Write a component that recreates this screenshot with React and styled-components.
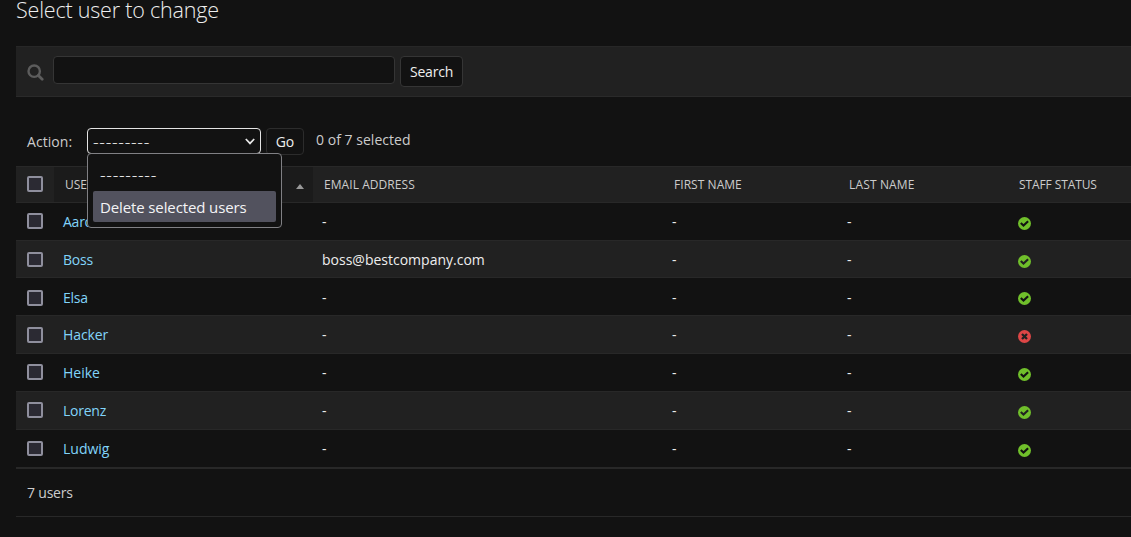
import React from 'react';
import styled, { createGlobalStyle } from 'styled-components';

const GlobalStyle = createGlobalStyle`
  * { box-sizing: border-box; }
  body {
    margin: 0;
    background: #121212;
    color: #eeeeee;
    font-family: "Segoe UI", "Open Sans", "Noto Sans", sans-serif;
    font-size: 14px;
    overflow: hidden;
  }
`;

const Page = styled.main`
  height: 537px;
  padding-left: 16px;
  overflow: hidden;
`;

const Title = styled.h1`
  height: 46px;
  margin: 0;
  font-size: 21.5px;
  font-weight: 300;
  line-height: 19px;
  letter-spacing: -0.2px;
`;

const Text = styled.span`
  letter-spacing: ${(p) => p.$ls || 0}px;
  white-space: pre;
`;

const Dashes = styled.span`
  font-size: 17.5px;
  font-weight: 300;
  line-height: 20px;
  letter-spacing: 0.7px;
  white-space: pre;
`;

const Toolbar = styled.form`
  display: flex;
  align-items: flex-start;
  height: 51px;
  padding: 9px 0 0 11px;
  background: #212121;
  border-top: 1px solid #272727;
  border-bottom: 1px solid #2a2a2a;
`;

const SearchIcon = styled.svg`
  display: block;
  width: 17px;
  height: 17px;
  margin: 8px 9px 0 0;
`;

const SearchField = styled.div`
  width: 342px;
  height: 28px;
  margin-right: 5px;
  background: #121212;
  border: 1px solid #353535;
  border-radius: 4px;
`;

const Button = styled.button`
  display: flex;
  align-items: center;
  justify-content: center;
  width: ${(p) => p.$w}px;
  height: ${(p) => p.$h}px;
  padding: 0;
  background: #121212;
  border: 1px solid ${(p) => p.$border || '#353535'};
  border-radius: 4px;
  color: #eeeeee;
  font: inherit;
`;

const Actions = styled.div`
  display: flex;
  align-items: flex-start;
  height: 69px;
  padding: 31px 0 0 11px;
  color: #cccccc;
`;

const ActionLabel = styled.label`
  width: 60px;
  line-height: 27px;
`;

const Select = styled.div`
  position: relative;
  display: flex;
  align-items: center;
  justify-content: space-between;
  width: 174px;
  height: 26px;
  margin-right: 5px;
  padding: 2px 5px 0 5px;
  border: 1px solid #e4e4e4;
  border-radius: 4px;
  color: #eeeeee;
`;

const Chevron = styled.svg`
  width: 10px;
  height: 8px;
`;

const Menu = styled.div`
  position: absolute;
  z-index: 2;
  top: 24px;
  left: -1px;
  width: 195px;
  height: 75px;
  padding: 6px 5px 5px;
  background: #121212;
  border: 1px solid #808084;
  border-radius: 4px;
`;

const MenuItem = styled.div`
  height: 31px;
  padding-left: 7px;
  line-height: 32px;
  font-size: 15px;
  color: #f4f4f6;
  border-radius: 2px;
  background: ${(p) => (p.$active ? '#52525e' : 'transparent')};
`;

const Counter = styled.span`
  margin-left: 12px;
  line-height: 23px;
`;

const Grid = styled.div`
  display: grid;
  grid-template-columns: 38px 259px 350px 175px 170px 1fr;
`;

const HeaderRow = styled(Grid)`
  height: 36px;
  background: #212121;
  border-top: 1px solid #282828;
  color: #cccccc;
  font-size: 12px;
`;

const HeaderCell = styled.div`
  display: flex;
  align-items: center;
  justify-content: space-between;
  padding: 0 9px 1px 11px;
  background: ${(p) => (p.$sorted ? '#1b1b1b' : 'transparent')};
`;

const SortArrow = styled.span`
  margin-top: 4px;
  border: 4.5px solid transparent;
  border-top: 0;
  border-bottom: 5px solid #999999;
`;

const Row = styled(Grid)`
  height: ${(p) => p.$h}px;
  background: ${(p) => (p.$odd ? '#212121' : '#121212')};
  border-top: 1px solid #282828;
  line-height: 20px;
`;

const Cell = styled.div`
  padding: ${(p) => p.$top || 9}px 0 0 9px;
`;

const CheckCell = styled.div`
  padding: ${(p) => p.$top}px 0 0 11px;
`;

const Checkbox = styled.div`
  width: 16px;
  height: ${(p) => p.$h || 16}px;
  background: #2b2a33;
  border: 2px solid #8f8f9d;
  border-radius: 2px;
`;

const StatusCell = styled.div`
  padding: 14px 0 0 10px;
`;

const StatusSvg = styled.svg`
  display: block;
  width: 13px;
  height: 13px;
`;

const Link = styled.a`
  color: #81d4fa;
`;

const Paginator = styled.footer`
  height: 50px;
  padding: 14px 0 0 11px;
  border-top: 2px solid #282828;
  border-bottom: 1px solid #282828;
  color: #cccccc;
  line-height: 20px;
`;

const users = [
  { name: 'Aaron', email: '-', staff: true, h: 38, check: 10 },
  { name: 'Boss', email: 'boss@bestcompany.com', staff: true, h: 37, check: 11, boxH: 15 },
  { name: 'Elsa', email: '-', staff: true, h: 38, check: 12, top: 10 },
  { name: 'Hacker', email: '-', staff: false, h: 38, check: 11, ls: -0.1 },
  { name: 'Heike', email: '-', staff: true, h: 38, check: 10, ls: 0 },
  { name: 'Lorenz', email: '-', staff: true, h: 38, check: 10 },
  { name: 'Ludwig', email: '-', staff: true, h: 38, check: 11, boxH: 15, ls: 0 },
];

function Status({ ok, hole }) {
  return (
    <StatusSvg viewBox="0 0 13 13">
      <circle cx="6.5" cy="6.5" r="6.5" fill={ok ? '#70bf2b' : '#dd4646'} />
      <path
        d={ok ? 'M2.8 6 L5.5 8.6 L10.1 4.2' : 'M4 4 L9 9 M9 4 L4 9'}
        fill="none"
        stroke={hole}
        strokeWidth={ok ? 2.1 : 2.3}
      />
    </StatusSvg>
  );
}

export default function App() {
  return (
    <>
      <GlobalStyle />
      <Page>
        <Title>Select user to change</Title>
        <Toolbar>
          <SearchIcon viewBox="0 0 17 17" fill="none" stroke="#5c5c5c">
            <circle cx="7.2" cy="7.2" r="5.7" strokeWidth="2.4" />
            <path d="M11.4 11.4 L15.2 15.2" strokeWidth="2.8" strokeLinecap="round" />
          </SearchIcon>
          <SearchField />
          <Button type="button" $w={63} $h={31}><Text $ls={-0.2}>Search</Text></Button>
        </Toolbar>
        <Actions>
          <ActionLabel><Text $ls={0.05}>Action:</Text></ActionLabel>
          <Select>
            <Dashes>---------</Dashes>
            <Chevron viewBox="0 0 10 8" fill="none" stroke="#e8e8e8" strokeWidth="1.7">
              <path d="M0.8 1 L5 5.4 L9.2 1" />
            </Chevron>
            <Menu>
              <MenuItem><Dashes>---------</Dashes></MenuItem>
              <MenuItem $active><Text $ls={-0.12}>Delete selected users</Text></MenuItem>
            </Menu>
          </Select>
          <Button type="button" $w={38} $h={27} $border="#2c2c2c"><Text>Go</Text></Button>
          <Counter><Text $ls={0.03}>0 of 7 selected</Text></Counter>
        </Actions>
        <HeaderRow>
          <CheckCell $top={9}><Checkbox /></CheckCell>
          <HeaderCell $sorted><Text>USERNAME</Text><SortArrow /></HeaderCell>
          <HeaderCell><Text $ls={0.06}>EMAIL ADDRESS</Text></HeaderCell>
          <HeaderCell><Text $ls={0.05}>FIRST NAME</Text></HeaderCell>
          <HeaderCell><Text $ls={0.15}>LAST NAME</Text></HeaderCell>
          <HeaderCell><Text $ls={-0.1}>STAFF STATUS</Text></HeaderCell>
        </HeaderRow>
        {users.map((u, i) => (
          <Row key={u.name} $odd={i % 2 === 1} $h={u.h}>
            <CheckCell $top={u.check}><Checkbox $h={u.boxH} /></CheckCell>
            <Cell $top={u.top}><Link><Text $ls={u.ls ?? -0.25}>{u.name}</Text></Link></Cell>
            <Cell $top={u.top}><Text>{u.email}</Text></Cell>
            <Cell $top={u.top}>-</Cell>
            <Cell $top={u.top}>-</Cell>
            <StatusCell><Status ok={u.staff} hole={i % 2 ? '#212121' : '#121212'} /></StatusCell>
          </Row>
        ))}
        <Paginator><Text $ls={-0.2}>7 users</Text></Paginator>
      </Page>
    </>
  );
}
